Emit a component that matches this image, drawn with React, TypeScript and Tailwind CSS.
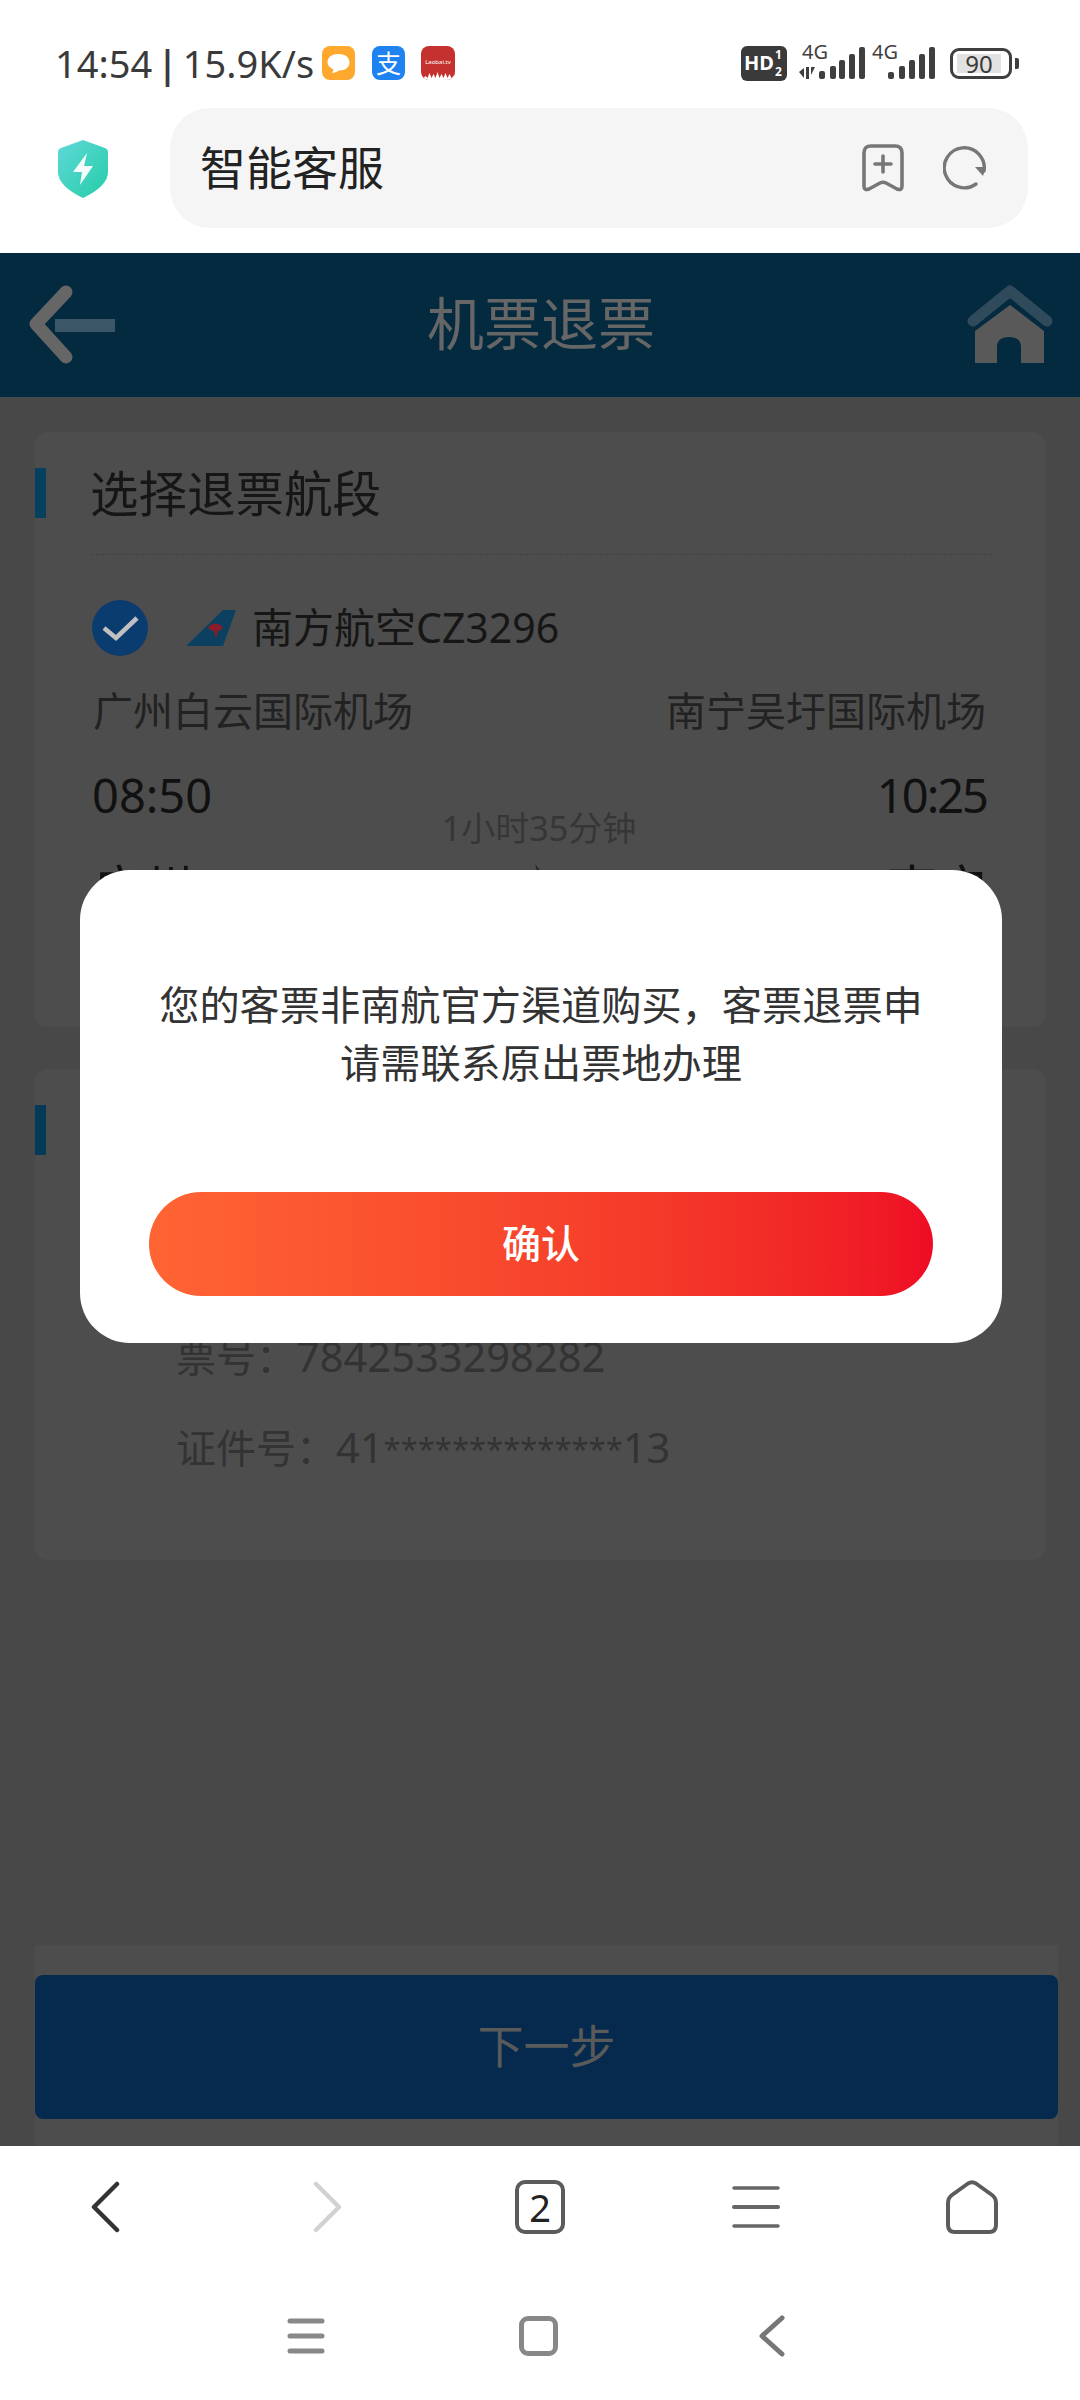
import React from "react";

const Shield = () => (
  <svg width="50" height="58" viewBox="0 0 50 58" className="block">
    <defs>
      <linearGradient id="sh" x1="0" y1="0" x2="1" y2="1">
        <stop offset="0" stopColor="#5fd8d8" />
        <stop offset="1" stopColor="#25cda8" />
      </linearGradient>
    </defs>
    <path d="M25 0 L47 8 Q50 9 50 12 V32 Q50 46 25 58 Q0 46 0 32 V12 Q0 9 3 8 Z" fill="url(#sh)" />
    <path d="M29 13 L15 32 H24 L22 45 L35 26 H26 Z" fill="#fff" opacity="0.95" />
  </svg>
);

const BubbleIcon = () => (
  <svg width="33" height="34" viewBox="0 0 33 34" className="block">
    <rect width="33" height="34" rx="8" fill="#ffa82e" />
    <path d="M16.5 8 C24 8 27.5 12 27.5 16.5 C27.5 21 23.5 24.5 17 24.5 C15 26 12.5 27 10 27 C11 25.5 11.5 24 11 23 C7.5 21.5 5.5 19.5 5.5 16.5 C5.5 12 9 8 16.5 8 Z" fill="#fff" />
  </svg>
);

const AlipayIcon = () => (
  <div className="w-[33px] h-[34px] rounded-[8px] bg-[#1e82f0] flex items-center justify-center text-white text-[25px] leading-[34px]">支</div>
);

const TvIcon = () => (
  <div className="relative w-[34px] h-[34px] rounded-[8px] bg-[#c5312e] overflow-hidden flex justify-center">
    <span className="text-[6px] leading-[8px] mt-[12px] text-white whitespace-nowrap">Laobai.tv</span>
    <svg width="34" height="9" viewBox="0 0 33 9" className="absolute bottom-0 left-0">
      <path d="M0 9 V4 L2 7 L4 5 L6 7 L8 2 L10 7 L12 3 L14 7 L16 1 L18 7 L20 3 L22 7 L24 2 L26 7 L28 3 L30 7 L33 4 V9 Z" fill="#fff" />
    </svg>
  </div>
);

const HdBadge = () => (
  <div className="w-[46px] h-[35px] rounded-[6px] bg-[#3a3a3a] flex items-center pl-[3px] text-white font-bold">
    <span className="text-[20px] leading-[34px]">HD</span>
    <span className="flex flex-col text-[12px] leading-[17px] ml-[1px]">
      <span>1</span>
      <span>2</span>
    </span>
  </div>
);

const Bars = ({ xs, tops }: { xs: number[]; tops: number[] }) => (
  <>
    {xs.map((x, i) => (
      <rect key={x} x={x} y={tops[i]} width="6" height={34 - tops[i]} rx="2" fill="#3f3f3f" />
    ))}
  </>
);

const SignalA = () => (
  <div className="relative w-[66px] h-[36px]">
    <span className="absolute left-[3px] top-[-4px] text-[20px] leading-[22px] text-[#3f3f3f]">4G</span>
    <svg width="66" height="36" viewBox="0 0 66 36" className="block">
      <path d="M0 27 L5 23 V33 Z M7 22 H10 V34 H7 Z M12 22 H16 L12 30 Z" fill="#3f3f3f" />
      <Bars xs={[20, 31, 40, 50, 60]} tops={[26, 21, 15, 9, 2]} />
    </svg>
  </div>
);

const SignalB = () => (
  <div className="relative w-[64px] h-[36px]">
    <span className="absolute left-0 top-[-4px] text-[20px] leading-[22px] text-[#3f3f3f]">4G</span>
    <svg width="64" height="36" viewBox="0 0 64 36" className="block">
      <Bars xs={[16, 27, 37, 47, 57]} tops={[27, 21, 15, 9, 2]} />
    </svg>
  </div>
);

const Battery = () => (
  <div className="flex items-center">
    <div className="w-[62px] h-[31px] rounded-[9px] border-[3px] border-[#3f3f3f] flex items-center pl-[4px]">
      <div className="w-[44px] h-[19px] bg-[#e2e2e2] flex items-center justify-center text-[24px] leading-[19px] text-[#3a3a3a]">90</div>
    </div>
    <div className="w-[4px] h-[11px] rounded-r-[2px] bg-[#3f3f3f] ml-[3px]" />
  </div>
);

const BookmarkIcon = () => (
  <svg width="42" height="48" viewBox="0 0 42 48" fill="none" stroke="#777" strokeWidth="3.6" strokeLinecap="round" strokeLinejoin="round" className="block">
    <path d="M9 2 H33 Q40 2 40 9 V42 Q40 47 35 45 L24 39 Q21 37.5 18 39 L7 45 Q2 47 2 42 V9 Q2 2 9 2 Z" />
    <path d="M21 12 V28 M13 20 H29" />
  </svg>
);

const RefreshIcon = () => (
  <svg width="44" height="44" viewBox="0 0 44 44" fill="none" className="block">
    <path d="M33 38 A20 20 0 1 1 41 25" stroke="#777" strokeWidth="3.4" strokeLinecap="round" />
    <path d="M32 21 H43 L40 30 Z" fill="#777" />
  </svg>
);

const HeaderBack = () => (
  <svg width="86" height="80" viewBox="0 0 86 80" className="block">
    <rect x="26" y="34" width="60" height="13" fill="#3b5767" />
    <path d="M37 7 L7 39 L37 72" fill="none" stroke="#666" strokeWidth="13" strokeLinecap="round" strokeLinejoin="round" />
  </svg>
);

const HeaderHome = () => (
  <svg width="86" height="80" viewBox="0 0 86 80" className="block">
    <path d="M6 36 L43 6 L80 36" fill="none" stroke="#2f4a5a" strokeWidth="11" strokeLinecap="round" strokeLinejoin="round" />
    <path d="M43 20 L77 46 V78 H54 V62 Q54 52 42 52 Q30 52 30 62 V78 H8 V46 Z" fill="#595959" />
  </svg>
);

const CheckCircle = () => (
  <svg width="56" height="56" viewBox="0 0 56 56" className="block">
    <circle cx="28" cy="28" r="28" fill="#0b3c70" />
    <path d="M12 28 L24 38 L45 18" fill="none" stroke="#c0c0c0" strokeWidth="4.5" strokeLinejoin="miter" />
  </svg>
);

const TailLogo = () => (
  <svg width="52" height="38" viewBox="0 0 52 38" className="block">
    <path d="M37 1 H50 L37 37 H0 Z" fill="#0c4060" />
    <path d="M22 18 Q29 11 37 18 Q35 22 32 22 L30 30 L28 22 Q24 22 22 18 Z" fill="#8a1c2a" />
  </svg>
);

const PlaneMark = () => (
  <svg width="40" height="40" viewBox="0 0 40 40" className="block">
    <path d="M16 0 L22 8 L34 14 L20 14 Z" fill="#222" />
  </svg>
);

const NavBack = ({ color, w }: { color: string; w: number }) => (
  <svg width="29" height="52" viewBox="0 0 29 52" fill="none" stroke={color} strokeWidth={w} strokeLinecap="round" strokeLinejoin="round" className="block">
    <path d="M26 3 L3 26 L26 49" />
  </svg>
);

const NavForward = () => (
  <svg width="29" height="52" viewBox="0 0 29 52" fill="none" stroke="#d2d2d2" strokeWidth="4.5" strokeLinecap="round" strokeLinejoin="round" className="block">
    <path d="M3 3 L26 26 L3 49" />
  </svg>
);

const NavMenu = () => (
  <svg width="48" height="44" viewBox="0 0 48 44" stroke="#666" strokeLinecap="round" className="block">
    <path d="M2 3 H46" strokeWidth="3.4" />
    <path d="M2 22 H46" strokeWidth="4" />
    <path d="M2 41 H46" strokeWidth="3.4" />
  </svg>
);

const NavHome = () => (
  <svg width="52" height="54" viewBox="0 0 52 54" fill="none" stroke="#5c5c5c" strokeWidth="4" strokeLinejoin="round" className="block">
    <path d="M22 3.5 Q26 1 30 3.5 L46 15 Q50 18 50 23 V45 Q50 52 43 52 H9 Q2 52 2 45 V23 Q2 18 6 15 Z" />
  </svg>
);

const SysMenu = () => (
  <svg width="38" height="36" viewBox="0 0 38 36" stroke="#888" strokeWidth="5" strokeLinecap="round" className="block">
    <path d="M3 3 H35 M3 18 H35 M3 33 H35" />
  </svg>
);

const SysBack = () => (
  <svg width="26" height="42" viewBox="0 0 26 42" fill="none" stroke="#777" strokeWidth="5" strokeLinecap="round" strokeLinejoin="round" className="block">
    <path d="M23 3 L3 21 L23 39" />
  </svg>
);

export default function App() {
  return (
    <div className="relative w-[1080px] h-[2400px] overflow-hidden bg-white flex flex-col font-['Noto_Sans','Noto_Sans_CJK_SC',sans-serif]">
      {/* status bar */}
      <div className="h-[108px] shrink-0 flex items-center pt-[18px] pl-[55px]">
        <span className="text-[38px] leading-[46px] text-[#3a3a3a] whitespace-nowrap w-[267px] [word-spacing:-5px]">14:54 <b className="font-semibold">|</b> 15.9K/s</span>
        <BubbleIcon />
        <div className="ml-[17px]"><AlipayIcon /></div>
        <div className="ml-[16px]"><TvIcon /></div>
        <div className="ml-auto flex items-center pr-[61px]">
          <HdBadge />
          <div className="ml-[12px]"><SignalA /></div>
          <div className="ml-[7px]"><SignalB /></div>
          <div className="ml-[14px]"><Battery /></div>
        </div>
      </div>

      {/* browser bar */}
      <div className="h-[145px] shrink-0 flex items-start pl-[58px]">
        <div className="mt-[32px]"><Shield /></div>
        <div className="ml-[62px] w-[858px] h-[120px] rounded-[40px] bg-[#f5f5f5] flex items-center pl-[30px] pr-[41px]">
          <span className="text-[46px] leading-[60px] text-[#222] pb-[2px]">智能客服</span>
          <div className="ml-auto"><BookmarkIcon /></div>
          <div className="ml-[39px]"><RefreshIcon /></div>
        </div>
      </div>

      {/* page behind the dialog */}
      <div className="h-[1893px] shrink-0 bg-[#484848] flex flex-col">
        <div className="h-[144px] shrink-0 bg-[#032a3f] flex items-center justify-between pl-[29px] pr-[27px]">
          <HeaderBack />
          <span className="text-[57px] leading-[70px] text-[#666] pb-[5px]">机票退票</span>
          <HeaderHome />
        </div>

        {/* flight card */}
        <div className="mt-[35px] ml-[35px] w-[1010px] h-[595px] shrink-0 rounded-[12px] bg-[#4d4d4d] pt-[36px] overflow-hidden">
          <div className="flex items-center h-[50px]">
            <div className="w-[11px] h-[50px] bg-[#06405f]" />
            <span className="ml-[44px] text-[48.5px] leading-[50px] text-[#161616]">选择退票航段</span>
          </div>
          <div className="mt-[36px] ml-[56px] w-[901px] border-t border-dashed border-[#424242]" />
          <div className="mt-[45px] ml-[57px] flex items-center h-[56px]">
            <CheckCircle />
            <div className="ml-[38px]"><TailLogo /></div>
            <span className="ml-[14px] text-[41px] leading-[50px] text-[#161616] pb-[3px]">南方航空CZ3296</span>
          </div>
          <div className="mt-[31px] pl-[58px] pr-[59px] flex justify-between h-[48px] text-[40px] leading-[48px] text-[#222]">
            <span>广州白云国际机场</span>
            <span>南宁吴圩国际机场</span>
          </div>
          <div className="mt-[34px] pl-[57px] pr-[58px] flex justify-between">
            <div className="flex flex-col">
              <span className="text-[47px] leading-[52px] text-[#111]">08:50</span>
              <span className="mt-[39px] ml-[1px] text-[50px] leading-[56px] text-[#111]">广州</span>
            </div>
            <div className="pt-[37px] mr-[11px] flex flex-col items-center">
              <span className="text-[34px] leading-[44px] text-[#363636]">1小时35分钟</span>
              <div className="mt-[14px]"><PlaneMark /></div>
            </div>
            <div className="flex flex-col items-end">
              <span className="text-[47px] leading-[52px] text-[#111] tracking-[-2px]">10:25</span>
              <span className="mt-[39px] text-[50px] leading-[56px] text-[#111]">南宁</span>
            </div>
          </div>
        </div>

        {/* passenger card */}
        <div className="mt-[42px] ml-[35px] w-[1010px] h-[491px] shrink-0 rounded-[12px] bg-[#4d4d4d] pt-[36px]">
          <div className="w-[11px] h-[50px] bg-[#033a58]" />
          <div className="mt-[176px] pl-[141px] text-[40px] leading-[50px] text-[#333] whitespace-nowrap">票号：<span className="text-[41.6px]">7842533298282</span></div>
          <div className="mt-[40px] pl-[141px] text-[40px] leading-[50px] text-[#333] whitespace-nowrap">证件号：<span className="text-[41.6px]">41<span className="text-[31px] align-[3px]">**************</span>13</span></div>
        </div>

        {/* footer button */}
        <div className="mt-auto ml-[35px] w-[1023px] bg-[#4d4d4d] pt-[30px] pb-[27px]">
          <div className="h-[144px] rounded-[8px] bg-[#062a4e] flex items-center justify-center text-[46px] leading-[60px] text-[#5a5a5a] pb-[4px]">下一步</div>
        </div>
      </div>

      {/* browser nav */}
      <div className="flex-1 bg-white pt-[34px]">
        <div className="grid grid-cols-5 h-[54px] items-center justify-items-center">
          <div className="mr-[5px]"><NavBack color="#333" w={4.5} /></div>
          <div className="ml-[6px]"><NavForward /></div>
          <div className="w-[50px] h-[54px] rounded-[10px] border-[4px] border-[#5c5c5c] flex items-center justify-center text-[38px] leading-[46px] text-[#222]">2</div>
          <NavMenu />
          <NavHome />
        </div>
        <div className="mt-[81px] ml-[189px] w-[700px] grid grid-cols-3 h-[42px] items-center justify-items-center">
          <SysMenu />
          <div className="w-[39px] h-[40px] rounded-[9px] border-[5px] border-[#888]" />
          <SysBack />
        </div>
      </div>

      {/* dialog */}
      <div className="absolute left-[80px] top-[870px] w-[922px] h-[473px] rounded-[50px] bg-white flex flex-col items-center">
        <div className="mt-[106px] w-[780px] text-center text-[40.2px] leading-[58px] text-[#333]">
          您的客票非南航官方渠道购买，客票退票申请需联系原出票地办理
        </div>
        <div className="mt-[100px] w-[784px] h-[104px] rounded-full bg-gradient-to-r from-[#ff6434] to-[#ee0b24] flex items-center justify-center text-[39px] leading-[50px] font-medium text-white pb-[2px]">确认</div>
      </div>
    </div>
  );
}
